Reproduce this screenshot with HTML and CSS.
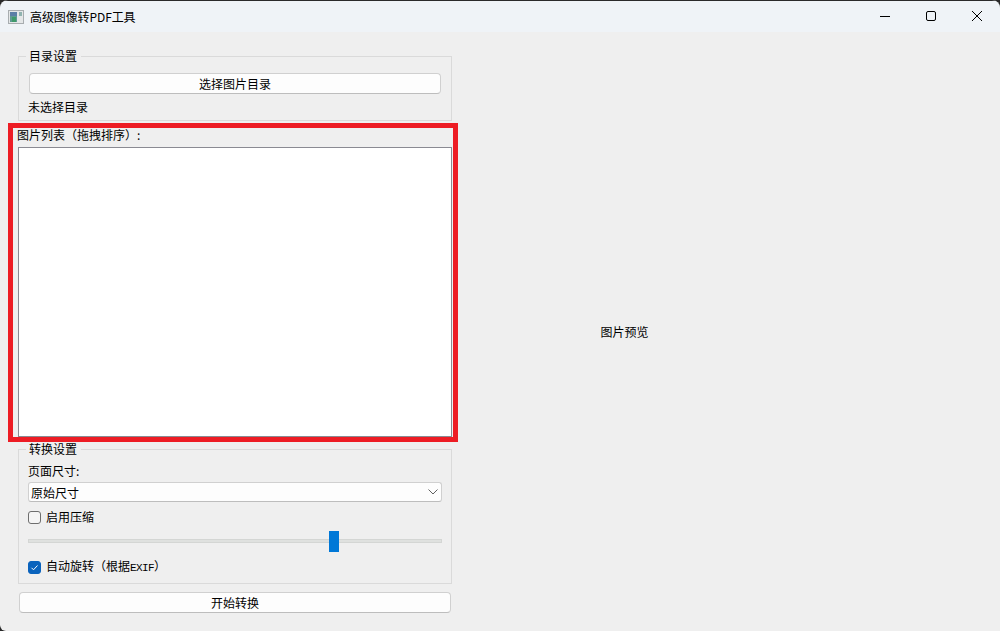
FILE: index.html
```html
<!DOCTYPE html>
<html lang="zh-CN">
<head>
<meta charset="utf-8">
<title>高级图像转PDF工具</title>
<link rel="stylesheet" href="styles.css">
</head>
<body>
<div class="window">
  <header class="titlebar">
    <svg class="app-icon" width="16" height="16" viewBox="0 0 16 16">
      <rect x="0.500" y="1.500" width="15" height="13" fill="#e4e7e8" stroke="#a8adb0"/>
      <rect x="2" y="3" width="7" height="10" fill="#5f9a92"/>
      <rect x="2" y="3" width="7" height="4" fill="#5b7fa6"/>
      <rect x="4" y="8" width="4" height="5" fill="#3f9a6a"/>
      <rect x="11" y="3" width="3" height="4" fill="#8fb3b0"/>
    </svg>
    <span class="title-text">高级图像转PDF工具</span>
    <div class="win-controls">
      <svg class="win-btn" width="46" height="31" viewBox="0 0 46 31"><path d="M18 15.500h10" stroke="#000" fill="none"/></svg>
      <svg class="win-btn" width="46" height="31" viewBox="0 0 46 31"><rect x="18.500" y="10.500" width="9" height="9" rx="1.500" stroke="#000" fill="none"/></svg>
      <svg class="win-btn" width="46" height="31" viewBox="0 0 46 31"><path d="M18 10l10 10M28 10l-10 10" stroke="#000" fill="none"/></svg>
    </div>
  </header>
  <main class="content">
    <section class="left">
      <fieldset class="group group-dir">
        <legend class="legend">目录设置</legend>
        <button class="btn btn-dir">选择图片目录</button>
        <div class="dir-label">未选择目录</div>
      </fieldset>
      <div class="list-block">
        <div class="highlight"></div>
        <div class="list-label">图片列表（拖拽排序）:</div>
        <div class="list-box"></div>
      </div>
      <fieldset class="group group-conv">
        <legend class="legend">转换设置</legend>
        <div class="size-label">页面尺寸:</div>
        <div class="combo">
          <span>原始尺寸</span>
          <svg width="12" height="8" viewBox="0 0 12 8"><path d="M1.500 1.500L6 6l4.500-4.500" stroke="#606060" fill="none"/></svg>
        </div>
        <label class="check-row check-first"><span class="check"></span><span>启用压缩</span></label>
        <div class="slider"><div class="track"></div><div class="thumb"></div></div>
        <label class="check-row check-second">
          <span class="check checked"><svg width="13" height="13" viewBox="0 0 13 13"><path d="M3.500 6.800l2 2 4-4.300" stroke="#fff" fill="none"/></svg></span>
          <span>自动旋转（根据<span class="mono">EXIF</span>）</span>
        </label>
      </fieldset>
      <button class="btn btn-start">开始转换</button>
    </section>
    <section class="preview">图片预览</section>
  </main>
</div>
</body>
</html>
```
FILE: styles.css
```css
* { box-sizing: border-box; }
html, body { margin: 0; height: 100%; background: #2a2a2a; overflow: hidden; }
body { font-family: "Noto Sans CJK SC", "Liberation Sans", sans-serif; font-size: 12px; color: #000; }
.window {
  height: 631px;
  padding-top: 1px;
  background: #efefef;
  border-radius: 8px 8px 0 6px;
  display: flex;
  flex-direction: column;
  overflow: hidden;
  box-shadow: inset 0 1px 0 #2a2a2a;
}
.titlebar {
  height: 31px;
  flex: none;
  background: #eff3f7;
  display: flex;
  align-items: center;
  padding-left: 8px;
}
.app-icon { flex: none; }
.title-text { margin-left: 6px; line-height: 16px; color: #000; letter-spacing: -0.1px; }
.win-controls { margin-left: auto; display: flex; }
.win-btn { display: block; width: 46px; height: 31px; }
.content { flex: 1; display: flex; min-height: 0; }
.left { width: 434px; margin-left: 18px; flex: none; display: flex; flex-direction: column; }
.group {
  margin: 0;
  min-width: 0;
  border: 1px solid #dadada;
  padding: 0 10px;
  background: transparent;
}
.legend { padding: 0 4px 0 3px; margin-left: -3px; line-height: 16px; height: 16px; }
.group-dir { margin-top: 16px; height: 73px; }
.btn {
  display: block;
  height: 21px;
  padding: 0;
  background: #fdfdfd;
  border: 1px solid #d0d0d0;
  border-bottom-color: #bdbdbd;
  border-radius: 4px;
  font: inherit;
  color: #000;
  text-align: center;
}
.btn-dir { width: 412px; margin-top: 9px; }
.dir-label { margin: 5px 0 0 -1px; line-height: 16px; }
.list-block { position: relative; margin-top: 5px; }
.highlight {
  position: absolute;
  left: -10px;
  top: -3px;
  width: 450px;
  height: 319px;
  border: 5px solid #ed1c24;
  pointer-events: none;
  z-index: 2;
}
.list-label { margin-left: -1px; padding-top: 1px; line-height: 16px; height: 21px; }
.list-box { height: 290px; background: #fff; border: 1px solid #8a8a92; }
.group-conv { margin-top: 4px; height: 143px; }
.size-label { margin: 6px 0 0 -1px; line-height: 16px; }
.combo {
  margin: 3px 0 0 -1px;
  width: 414px;
  height: 20px;
  background: #fdfdfd;
  border: 1px solid #d0d0d0;
  border-bottom-color: #bdbdbd;
  border-radius: 3px;
  display: flex;
  align-items: center;
  justify-content: space-between;
  padding: 0 2px;
}
.check-row { display: flex; align-items: center; margin-left: -1px; line-height: 16px; }
.check-first { margin-top: 7px; height: 16px; }
.check-second { margin-top: 7px; height: 16px; }
.check {
  width: 13px; height: 13px; margin-right: 5px; flex: none;
  background: #f5f5f5; border: 1px solid #6e6e6e; border-radius: 3px;
  display: block;
}
.checked { background: #0a63bd; border-color: #0a63bd; position: relative; }
.checked svg { position: absolute; left: -1px; top: -1px; display: block; }
.mono { font-family: "Liberation Mono", monospace; font-size: 11px; letter-spacing: -0.6px; }
.slider { position: relative; width: 414px; height: 21px; margin: 6px 0 0 -1px; }
.track { position: absolute; left: 0; right: 0; top: 8px; height: 4px; background: #dfe1df; border: 1px solid #d4d6d4; }
.thumb { position: absolute; left: 301px; top: 0; width: 10px; height: 21px; background: #0078d7; }
.btn-start { width: 432px; margin: 8px 0 0 1px; }
.preview { flex: 1; display: flex; align-items: center; justify-content: center; margin-left: 7px; margin-right: 210px; white-space: nowrap; }
```
